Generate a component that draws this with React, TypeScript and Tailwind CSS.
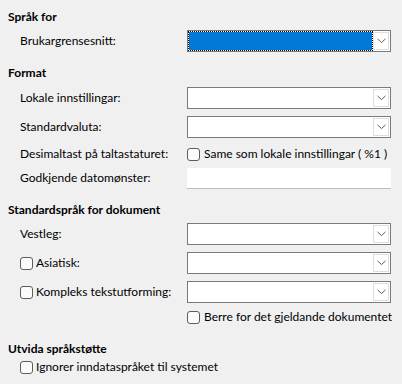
import React from 'react'

function Chevron() {
  return (
    <svg width="9" height="6" viewBox="0 0 9 6" className="block">
      <path d="M0.5 0.8 L4.5 4.6 L8.5 0.8" fill="none" stroke="#5f5f5f" strokeWidth="1" />
    </svg>
  )
}

function Combo({ focused = false }: { focused?: boolean }) {
  return (
    <div className="w-[204px] h-[22px] border border-[#7a7a7a] bg-white flex">
      <div className="flex-1 h-full">
        {focused && (
          <div className="h-full border border-dotted border-black bg-[#0078d7] bg-clip-padding" />
        )}
      </div>
      <div className="w-[16px] my-[1px] mr-[1px] border border-[#dedede] bg-white flex items-center justify-center">
        <Chevron />
      </div>
    </div>
  )
}

function Check() {
  return <span className="w-[13px] h-[13px] rounded-[3px] border border-[#5c5c5c] bg-[#fbfbfb] shrink-0" />
}

function Heading({ children, className = '' }: { children: React.ReactNode; className?: string }) {
  return <div className={`h-4 leading-4 font-bold pl-2 ${className}`}>{children}</div>
}

function Row({ label, children, className = '' }: { label: React.ReactNode; children: React.ReactNode; className?: string }) {
  return (
    <div className={`flex items-center ${className}`}>
      <div className="w-[187px] pl-5 flex items-center gap-[3px] whitespace-nowrap">{label}</div>
      {children}
    </div>
  )
}

export default function App() {
  return (
    <div
      className="w-[402px] h-[384px] bg-[#f0f0f0] text-[12px] text-black flex flex-col pt-[9px] overflow-hidden"
      style={{ fontFamily: 'Lato, "Noto Sans", sans-serif' }}
    >
      <Heading>Språk for</Heading>
      <Row label="Brukargrensesnitt:" className="mt-[5px] h-[22px]">
        <Combo focused />
      </Row>

      <Heading className="mt-[13px]">Format</Heading>
      <Row label="Lokale innstillingar:" className="mt-[6px] h-[22px]">
        <Combo />
      </Row>
      <Row label="Standardvaluta:" className="mt-[7px] h-[22px]">
        <Combo />
      </Row>
      <Row label="Desimaltast på taltastaturet:" className="mt-[6px] h-[20px]">
        <div className="flex items-center gap-[4px] whitespace-nowrap">
          <Check />
          <span>Same som lokale innstillingar ( %1 )</span>
        </div>
      </Row>
      <Row label="Godkjende datomønster:" className="mt-[3px] h-[22px]">
        <div className="w-[204px] h-[21px] bg-white border-b border-[#bdbdbd]" />
      </Row>

      <Heading className="mt-[13px]">Standardspråk for dokument</Heading>
      <Row label="Vestleg:" className="mt-[5px] h-[22px]">
        <Combo />
      </Row>
      <Row label={<><Check /><span>Asiatisk:</span></>} className="mt-[7px] h-[22px]">
        <Combo />
      </Row>
      <Row label={<><Check /><span>Kompleks tekstutforming:</span></>} className="mt-[7px] h-[22px]">
        <Combo />
      </Row>
      <Row label="" className="mt-[4px] h-[20px]">
        <div className="flex items-center gap-[4px] whitespace-nowrap">
          <Check />
          <span>Berre for det gjeldande dokumentet</span>
        </div>
      </Row>

      <Heading className="mt-[14px]">Utvida språkstøtte</Heading>
      <div className="h-[20px] pl-5 flex items-center gap-[3px] whitespace-nowrap">
        <Check />
        <span>Ignorer inndataspråket til systemet</span>
      </div>
    </div>
  )
}
